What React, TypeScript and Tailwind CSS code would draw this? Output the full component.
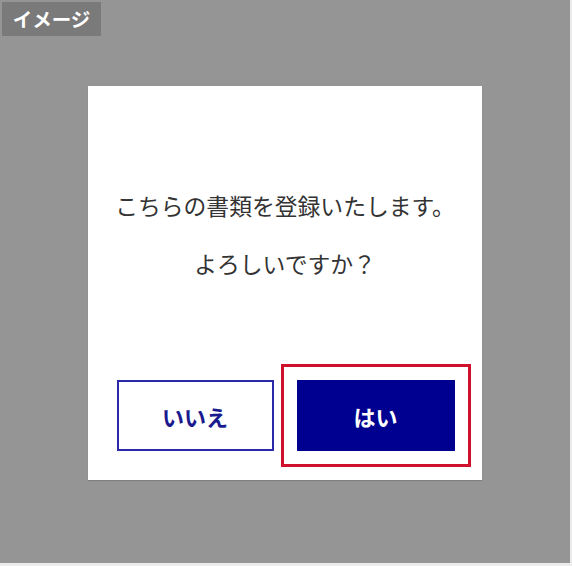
export default function App() {
  return (
    <div
      className="w-[572px] h-[566px] bg-[#ececec]"
      style={{ fontFamily: '"Noto Sans CJK JP", "Noto Sans", sans-serif' }}
    >
      <div className="w-[570px] h-[563px] bg-[#959595] flex flex-col">
        <div className="mt-[2px] ml-[2px] w-[99px] h-[34px] bg-[#7a7a7a] flex items-center justify-center text-white font-bold text-[19.5px] leading-none">
          イメージ
        </div>
        <div className="ml-[88px] mt-[50px] w-[394px] h-[394px] bg-white shadow-[0_1px_1px_rgba(0,0,0,0.15)] flex flex-col items-center pt-[103px]">
          <p className="text-[22.8px] leading-[33px] text-[#333333]">こちらの書類を登録いたします。</p>
          <p className="mt-[25px] text-[22.8px] leading-[33px] text-[#333333]">よろしいですか？</p>
          <div className="mt-[100px] flex gap-[23px] pl-[1px]">
            <button className="w-[157px] h-[71px] border-2 border-[#2a2aa8] bg-white text-[#1a1a8f] font-bold text-[22px] leading-none">
              いいえ
            </button>
            <button className="w-[158px] h-[71px] bg-[#000090] text-white font-bold text-[22px] leading-none outline-[3px] outline-solid outline-[#d0112b] outline-offset-[13px]">
              はい
            </button>
          </div>
        </div>
      </div>
    </div>
  );
}
